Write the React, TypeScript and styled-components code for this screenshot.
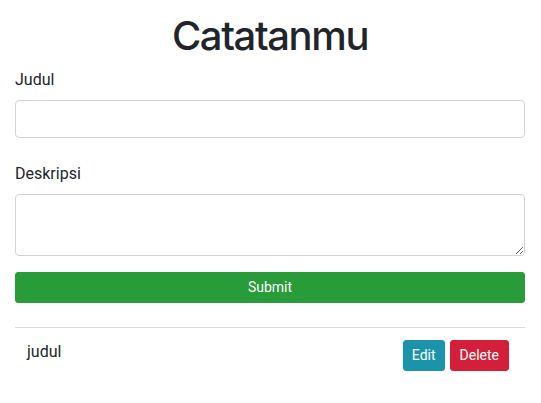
import React from "react";
import styled, { createGlobalStyle } from "styled-components";

const GlobalStyle = createGlobalStyle`
  html, body {
    margin: 0;
    padding: 0;
    background: #ffffff;
  }
  body {
    font-family: Roboto, "Liberation Sans", Arial, sans-serif;
    font-size: 16px;
    line-height: 1.5;
    color: #212529;
  }
  *, *::before, *::after { box-sizing: border-box; }
`;

const Container = styled.div`
  padding: 12px 16px 0 15px;
  display: flex;
  flex-direction: column;
`;

const Title = styled.h1`
  margin: 0 0 8px 0;
  font-family: Inter, Roboto, "Liberation Sans", sans-serif;
  font-size: 40px;
  font-weight: 500;
  letter-spacing: -1.4px;
  line-height: 1.2;
  text-align: center;
  color: #212529;
`;

const Form = styled.form`
  display: flex;
  flex-direction: column;
`;

const FormGroup = styled.div<{ $mb: number }>`
  display: flex;
  flex-direction: column;
  margin-bottom: ${(p) => p.$mb}px;
`;

const Label = styled.label`
  display: block;
  margin-bottom: 8px;
  font-size: 16px;
  line-height: 24px;
`;

const Input = styled.input`
  display: block;
  width: 100%;
  height: 38px;
  padding: 6px 12px;
  font: inherit;
  color: #495057;
  background: #fff;
  border: 1px solid #ced4da;
  border-radius: 4px;
  outline: none;
`;

const TextArea = styled.textarea`
  display: block;
  width: 100%;
  height: 62px;
  padding: 6px 12px;
  font: inherit;
  color: #495057;
  background: #fff;
  border: 1px solid #ced4da;
  border-radius: 4px;
  resize: vertical;
  outline: none;
`;

const SubmitButton = styled.button`
  display: block;
  width: 100%;
  height: 31px;
  padding: 4px 8px;
  font-family: inherit;
  font-size: 14px;
  line-height: 21px;
  color: #fff;
  background: #279c38;
  border: 1px solid #279c38;
  border-radius: 3px;
  cursor: pointer;
`;

const Divider = styled.hr`
  margin: 24px 0 0 0;
  border: 0;
  border-top: 1px solid #dcdcdc;
`;

const NoteRow = styled.div`
  display: flex;
  align-items: flex-start;
  justify-content: space-between;
  padding: 12px 16px 12px 12px;
`;

const NoteTitle = styled.span`
  font-size: 16px;
  line-height: 24px;
  color: #212529;
`;

const Actions = styled.div`
  display: flex;
  gap: 5px;
`;

const ActionButton = styled.button<{ $variant: "info" | "danger" }>`
  height: 31px;
  padding: 4px ${(p) => (p.$variant === "info" ? 8 : 9)}px;
  font-family: inherit;
  font-size: 14px;
  line-height: 21px;
  color: #fff;
  background: ${(p) => (p.$variant === "info" ? "#1b93ab" : "#d41f3b")};
  border: 1px solid ${(p) => (p.$variant === "info" ? "#1b93ab" : "#d41f3b")};
  border-radius: 3px;
  cursor: pointer;
`;

export default function App() {
  return (
    <>
      <GlobalStyle />
      <Container>
        <Title>Catatanmu</Title>
        <Form onSubmit={(e) => e.preventDefault()}>
          <FormGroup $mb={24}>
            <Label htmlFor="judul">Judul</Label>
            <Input id="judul" type="text" />
          </FormGroup>
          <FormGroup $mb={16}>
            <Label htmlFor="deskripsi">Deskripsi</Label>
            <TextArea id="deskripsi" />
          </FormGroup>
          <SubmitButton type="submit">Submit</SubmitButton>
        </Form>
        <Divider />
        <NoteRow>
          <NoteTitle>judul</NoteTitle>
          <Actions>
            <ActionButton $variant="info">Edit</ActionButton>
            <ActionButton $variant="danger">Delete</ActionButton>
          </Actions>
        </NoteRow>
      </Container>
    </>
  );
}
